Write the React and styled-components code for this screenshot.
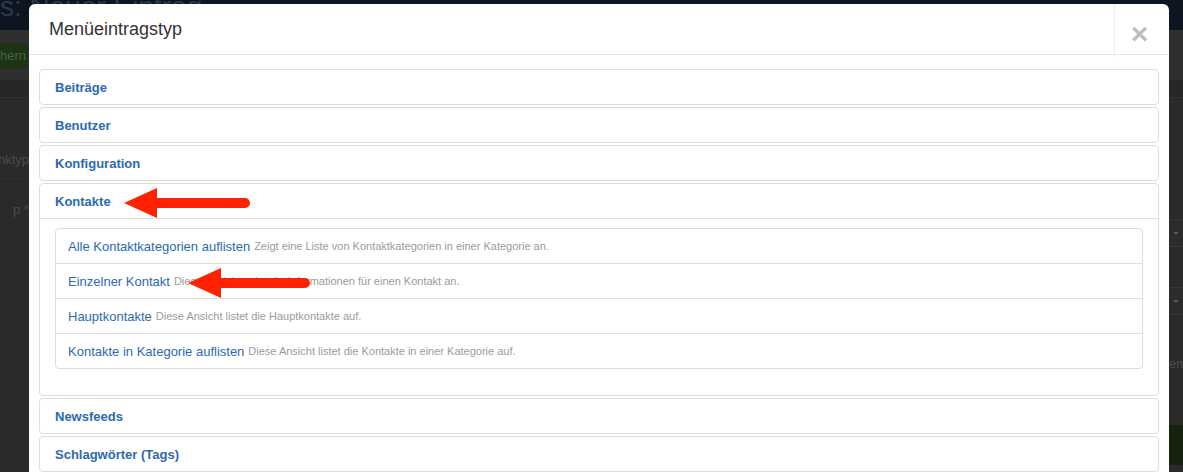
import React from 'react';
import styled, { createGlobalStyle } from 'styled-components';

const GlobalStyle = createGlobalStyle`
  html, body {
    margin: 0;
    padding: 0;
    background: #2a2a2a;
    font-family: "Liberation Sans", Arial, Helvetica, sans-serif;
  }
`;

// the darkened admin page behind the modal
const Page = styled.div`
  position: relative;
  width: 1183px;
  height: 472px;
  overflow: hidden;
  background: #2a2a2a;
`;

const TopBar = styled.div`
  height: 30px;
  background: #0d1620;
  overflow: hidden;
  color: #2b3947;
  font-size: 28px;
  line-height: 30px;
  white-space: nowrap;
  span {
    display: block;
    margin-top: -8px;
  }
`;

const Toolbar = styled.div`
  height: 50px;
  background: #2f2f2f;
  display: flex;
  align-items: center;
  justify-content: space-between;
`;

const SaveButton = styled.div`
  width: 28px;
  height: 26px;
  margin-top: 2px;
  background: #1c3316;
  color: #46633f;
  font-size: 13px;
  line-height: 26px;
  overflow: hidden;
  white-space: nowrap;
`;

const SubBar = styled.div`
  height: 17px;
  background: #272727;
  border-bottom: 1px solid #323232;
`;

const Content = styled.div`
  display: flex;
  justify-content: space-between;
`;

const LeftCol = styled.div`
  width: 29px;
  overflow: hidden;
  white-space: nowrap;
  color: #4a4a4a;
  font-size: 13px;
`;

const LeftLabel = styled.div`
  height: ${(p) => p.h}px;
  margin-top: ${(p) => p.mt || 0}px;
  display: flex;
  align-items: center;
  justify-content: flex-end;
  border-bottom: ${(p) => (p.line ? '1px solid #313131' : 'none')};
`;

const RightCol = styled.div`
  width: 14px;
  display: flex;
  flex-direction: column;
`;

const FakeSelect = styled.div`
  height: 26px;
  margin-top: ${(p) => p.mt}px;
  border-top: 1px solid #353535;
  border-bottom: 1px solid #353535;
  background: #2c2c2c;
  display: flex;
  align-items: center;
  justify-content: center;
  &::after {
    content: '';
    border-left: 3px solid transparent;
    border-right: 3px solid transparent;
    border-top: 3px solid #555;
  }
`;

const RightText = styled.div`
  margin-top: 41px;
  color: #4a4a4a;
  font-size: 13px;
  white-space: nowrap;
`;

const GreenFoot = styled.div`
  margin-top: 54px;
  height: 40px;
  background: #15220e;
`;

// modal
const Overlay = styled.div`
  position: absolute;
  inset: 0;
  padding: 4px 14px 0 29px;
`;

const Modal = styled.div`
  background: #fff;
  border-radius: 6px 6px 0 0;
  height: 100%;
`;

const Header = styled.div`
  display: flex;
  height: 50px;
  border-bottom: 1px solid #e5e5e5;
`;

const Title = styled.h3`
  flex: 1;
  margin: 0;
  padding: 0 0 0 20px;
  font-size: 18px;
  font-weight: normal;
  line-height: 50px;
  color: #333;
`;

const CloseBox = styled.div`
  width: 55px;
  height: 54px;
  border-left: 1px solid #eee;
  display: flex;
  align-items: center;
  justify-content: center;
  padding: 6px 5px 0 0;
  box-sizing: border-box;
  color: #bdbdbd;
  font-size: 30px;
  font-weight: bold;
  margin-bottom: -4px;
`;

const Body = styled.div`
  padding: 14px 10px 0;
`;

const Group = styled.div`
  border: 1px solid #ddd;
  border-radius: 4px;
  margin-bottom: 2px;
`;

const GroupHeading = styled.div`
  position: relative;
  height: 34px;
  display: flex;
  align-items: center;
  padding-left: 15px;
  font-size: 13px;
  font-weight: bold;
  color: #2d6aaf;
  border-bottom: ${(p) => (p.open ? '1px solid #ddd' : 'none')};
`;

const GroupBody = styled.div`
  padding: 9px 15px 26px;
`;

const List = styled.div`
  border: 1px solid #ddd;
  border-radius: 4px;
`;

const Item = styled.div`
  position: relative;
  height: 34px;
  display: flex;
  align-items: center;
  gap: 4px;
  padding-left: 12px;
  white-space: nowrap;
  & + & {
    border-top: 1px solid #ddd;
  }
`;

const ItemLink = styled.span`
  font-size: 13px;
  color: #2d6aaf;
`;

const ItemDesc = styled.span`
  font-size: 11px;
  color: #9b9b9b;
`;

const ArrowSvg = styled.svg`
  position: absolute;
  left: ${(p) => p.x}px;
  top: ${(p) => p.y}px;
`;

function RedArrow({ x, y, len }) {
  return (
    <ArrowSvg x={x} y={y} width={len + 4} height={30} viewBox={`0 0 ${len + 4} 30`}>
      <path d="M0 15 L33 0 L33 30 Z" fill="#ff2200" />
      <line x1="30" y1="15" x2={len - 2} y2="15" stroke="#ff2200" strokeWidth="10" strokeLinecap="round" />
    </ArrowSvg>
  );
}

const groupsBefore = ['Beiträge', 'Benutzer', 'Konfiguration'];
const groupsAfter = ['Newsfeeds', 'Schlagwörter (Tags)'];

const items = [
  ['Alle Kontaktkategorien auflisten', 'Zeigt eine Liste von Kontaktkategorien in einer Kategorie an.'],
  ['Einzelner Kontakt', 'Diese Ansicht zeigt die Informationen für einen Kontakt an.'],
  ['Hauptkontakte', 'Diese Ansicht listet die Hauptkontakte auf.'],
  ['Kontakte in Kategorie auflisten', 'Diese Ansicht listet die Kontakte in einer Kategorie auf.'],
];

export default function App() {
  return (
    <>
      <GlobalStyle />
      <Page>
        <TopBar><span>s: Neuer Eintrag</span></TopBar>
        <Toolbar>
          <SaveButton>hern</SaveButton>
        </Toolbar>
        <SubBar />
        <Content>
          <LeftCol>
            <LeftLabel mt={43} h={37} line>nktyp</LeftLabel>
            <LeftLabel h={60}>p *</LeftLabel>
          </LeftCol>
          <RightCol>
            <FakeSelect mt={121} />
            <FakeSelect mt={40} />
            <RightText>em</RightText>
            <GreenFoot />
          </RightCol>
        </Content>

        <Overlay>
          <Modal>
            <Header>
              <Title>Menüeintragstyp</Title>
              <CloseBox>×</CloseBox>
            </Header>
            <Body>
              {groupsBefore.map((g) => (
                <Group key={g}>
                  <GroupHeading>{g}</GroupHeading>
                </Group>
              ))}
              <Group>
                <GroupHeading open>
                  Kontakte
                  <RedArrow x={84} y={4} len={123} />
                </GroupHeading>
                <GroupBody>
                  <List>
                    {items.map(([link, desc], i) => (
                      <Item key={link}>
                        <ItemLink>{link}</ItemLink>
                        <ItemDesc>{desc}</ItemDesc>
                        {i === 1 && <RedArrow x={132} y={4} len={119} />}
                      </Item>
                    ))}
                  </List>
                </GroupBody>
              </Group>
              {groupsAfter.map((g) => (
                <Group key={g}>
                  <GroupHeading>{g}</GroupHeading>
                </Group>
              ))}
            </Body>
          </Modal>
        </Overlay>
      </Page>
    </>
  );
}
